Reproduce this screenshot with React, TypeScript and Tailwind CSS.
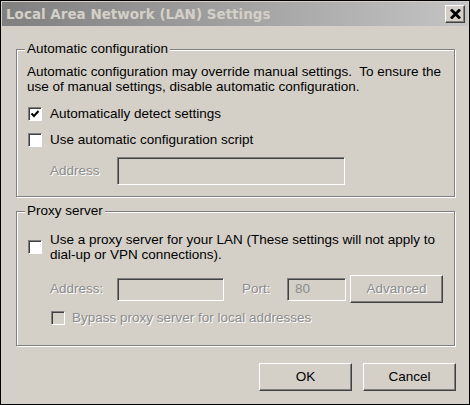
import React from 'react';

const Check = ({ checked = false, disabled = false }: { checked?: boolean; disabled?: boolean }) => (
  <div
    className={`w-[14px] h-[14px] shrink-0 border border-t-[#808080] border-l-[#808080] border-b-white border-r-white shadow-[inset_1px_1px_0_#404040] flex items-center justify-center ${
      disabled ? 'bg-[#d4d0c8]' : 'bg-white'
    }`}
  >
    {checked && (
      <svg width="10" height="10" viewBox="0 0 10 10">
        <path d="M1.5 4.5 L4 7 L8.5 2" fill="none" stroke="#000" strokeWidth="2" />
      </svg>
    )}
  </div>
);

const Field = ({ className = '', children }: { className?: string; children?: React.ReactNode }) => (
  <div
    className={`border border-t-[#808080] border-l-[#808080] border-b-white border-r-white shadow-[inset_1px_1px_0_#404040] bg-[#d4d0c8] ${className}`}
  >
    {children}
  </div>
);

const Button = ({ label, disabled = false }: { label: string; disabled?: boolean }) => (
  <div
    className={`w-[93px] h-[28px] flex items-center justify-center border border-t-white border-l-white border-b-[#404040] border-r-[#404040] shadow-[inset_-1px_-1px_0_#808080] ${
      disabled ? 'text-[#8c8c8c] [text-shadow:1px_1px_0_#fff]' : 'text-black'
    }`}
  >
    {label}
  </div>
);

const Group = ({ title, className = '', children }: { title: string; className?: string; children: React.ReactNode }) => (
  <div className={`relative w-[439px] border border-[#808080] shadow-[inset_1px_1px_0_#fff,1px_1px_0_#fff] pl-[10px] ${className}`}>
    <span className="absolute -top-[9px] left-[8px] px-[2px] bg-[#d4d0c8] leading-[16px]">{title}</span>
    {children}
  </div>
);

const dim = 'text-[#8c8c8c] [text-shadow:1px_1px_0_#fff]';

export default function App() {
  return (
    <div className="w-[470px] h-[405px] border border-black bg-[#d4d0c8] p-px flex flex-col text-[13.5px] text-black font-['Liberation_Sans',Arial,sans-serif] overflow-hidden">
      {/* title bar */}
      <div className="h-[24px] flex items-center justify-between pl-[4px] pr-[3px] bg-gradient-to-r from-[#808080] to-[#c4c4c4]">
        <span className="font-bold text-[13.5px] text-[#d4d0c8] font-['DejaVu_Sans',sans-serif]">Local Area Network (LAN) Settings</span>
        <div className="w-[20px] h-[18px] flex items-center justify-center bg-[#d4d0c8] border border-t-white border-l-white border-b-[#404040] border-r-[#404040] shadow-[inset_-1px_-1px_0_#808080]">
          <svg width="11" height="10" viewBox="0 0 11 10">
            <path d="M1 0.5 L10 9.5 M10 0.5 L1 9.5" stroke="#000" strokeWidth="2.8" />
          </svg>
        </div>
      </div>

      <div className="flex-1 flex flex-col px-[14px]">
        <Group title="Automatic configuration" className="mt-[23px] h-[148px] pt-[14px]">
          <p className="leading-[15px]">
            Automatic configuration may override manual settings.{'\u00a0'} To ensure the
            <br />
            use of manual settings, disable automatic configuration.
          </p>
          <div className="mt-[13px] flex items-center gap-[8px] ml-px">
            <Check checked />
            <span className="leading-[14px]">Automatically detect settings</span>
          </div>
          <div className="mt-[12px] flex items-center gap-[8px] ml-px">
            <Check />
            <span className="leading-[14px]">Use automatic configuration script</span>
          </div>
          <div className="mt-[10px] flex items-center">
            <span className={`w-[90px] pl-[23px] ${dim}`}>Address</span>
            <Field className="w-[228px] h-[28px]" />
          </div>
        </Group>

        <Group title="Proxy server" className="mt-[14px] h-[135px] pt-[20px]">
          <div className="flex items-center gap-[8px] ml-px">
            <Check />
            <span className="leading-[15px]">
              Use a proxy server for your LAN (These settings will not apply to
              <br />
              dial-up or VPN connections).
            </span>
          </div>
          <div className="mt-[13px] flex items-center">
            <span className={`w-[90px] pl-[23px] ${dim}`}>Address:</span>
            <Field className="w-[107px] h-[23px]" />
            <span className={`ml-[18px] w-[45px] ${dim}`}>Port:</span>
            <Field className="w-[59px] h-[23px] pl-[7px] flex items-center">
              <span className="text-[#8c8c8c]">80</span>
            </Field>
            <div className="ml-[4px]">
              <Button label="Advanced" disabled />
            </div>
          </div>
          <div className="mt-[8px] flex items-center gap-[7px] ml-[24px]">
            <Check disabled />
            <span className={`leading-[14px] ${dim}`}>Bypass proxy server for local addresses</span>
          </div>
        </Group>

        <div className="mt-[17px] -mr-[2px] flex justify-end gap-[11px]">
          <Button label="OK" />
          <Button label="Cancel" />
        </div>
      </div>
    </div>
  );
}
